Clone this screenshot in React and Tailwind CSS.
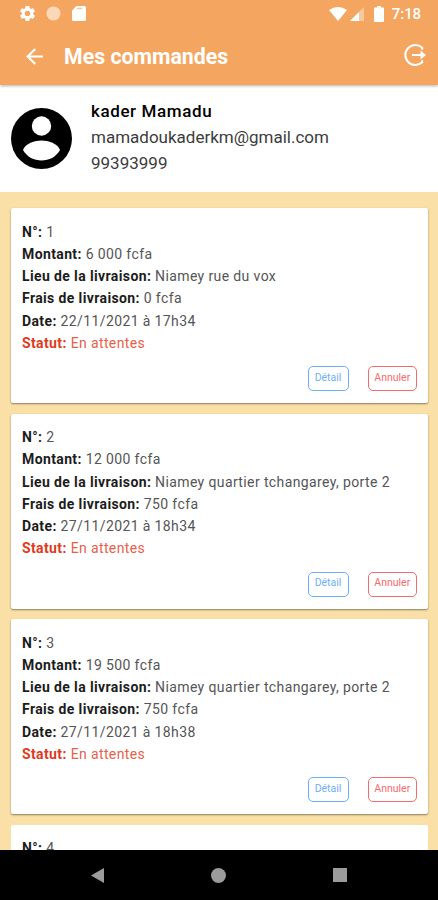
import React from "react"
import { MdSettings, MdArrowBack } from "react-icons/md"

const orders = [
  {
    id: 1,
    amount: "6 000 fcfa",
    place: "Niamey rue du vox",
    fee: "0 fcfa",
    date: "22/11/2021 à 17h34",
  },
  {
    id: 2,
    amount: "12 000 fcfa",
    place: "Niamey quartier tchangarey, porte 2",
    fee: "750 fcfa",
    date: "27/11/2021 à 18h34",
  },
  {
    id: 3,
    amount: "19 500 fcfa",
    place: "Niamey quartier tchangarey, porte 2",
    fee: "750 fcfa",
    date: "27/11/2021 à 18h38",
  },
]

function StatusBar() {
  return (
    <div className="flex h-[27px] items-center pl-[18px] pr-[17px]">
      <MdSettings className="size-[19px]" />
      <svg className="ml-[9px] size-[15px]" viewBox="0 0 15 15">
        <circle cx="7.5" cy="7.5" r="7" fill="#fbd9b8" />
        <path
          d="M12 2.500A7 7 0 0 1 2.500 12.300A7 7 0 0 0 12 2.500z"
          fill="#fff"
          opacity="0.8"
        />
      </svg>
      <svg className="ml-[11px] h-[15px] w-[14px]" viewBox="0 0 14 15">
        <path
          d="M4.500 0H12.500Q14 0 14 1.500V13.500Q14 15 12.500 15H1.500Q0 15 0 13.500V4.500z"
          fill="#fff"
        />
        <path d="M5 2.500h5" stroke="#f8c79c" strokeWidth="1.500" />
      </svg>
      <svg className="ml-auto h-[14px] w-[18px]" viewBox="0 0 18 14">
        <path d="M0 3Q9-3 18 3L9 14z" fill="#fff" />
      </svg>
      <svg className="ml-[3px] size-[14px]" viewBox="0 0 14 14">
        <path d="M14 0V14H0z" fill="#fff" opacity="0.4" />
        <path d="M9 5V14H0z" fill="#fff" />
      </svg>
      <svg className="ml-[10px] h-4 w-[10px]" viewBox="0 0 10 16">
        <path
          d="M3 0H7V1.500H9Q10 1.500 10 2.500V15Q10 16 9 16H1Q0 16 0 15V2.500Q0 1.500 1 1.500H3z"
          fill="#fff"
        />
      </svg>
      <span className="ml-2 mt-0.5 text-[15px] font-medium leading-none tracking-[-0.1px]">
        7:18
      </span>
    </div>
  )
}

function Header() {
  return (
    <header className="relative z-10 h-[85px] shrink-0 bg-[#f4a660] text-white shadow-[0_1px_3px_rgba(0,0,0,0.3)]">
      <StatusBar />
      <div className="flex h-[58px] items-center pl-[22px] pr-[11px]">
        <MdArrowBack className="size-[25px]" />
        <h1 className="ml-[17px] mt-px text-[21.3px] font-bold leading-none">
          Mes commandes
        </h1>
        <svg
          className="mb-[3px] ml-auto size-6"
          viewBox="0 0 24 24"
          fill="none"
          stroke="currentColor"
          strokeWidth="2"
        >
          <path d="M19.200 6.700V4.700A10 10 0 1 0 19.200 19.300V17.300" />
          <path d="M9 12h11" />
          <path d="M17.500 7.500l5.500 4.500l-5.500 4.500z" fill="currentColor" stroke="none" />
        </svg>
      </div>
    </header>
  )
}

function Profile() {
  return (
    <section className="flex h-[107px] shrink-0 items-start bg-white pl-[11px]">
      <svg className="mt-[23px] size-[61px]" viewBox="0 0 61 61">
        <circle cx="30.500" cy="30.500" r="30.500" />
        <circle cx="30.500" cy="18" r="9.700" fill="#fff" />
        <path
          d="M12 42C14 35.500 24 32.500 30.500 32.500S47 35.500 49 42C45 49 38 52.500 30.500 52.500S16 49 12 42z"
          fill="#fff"
        />
      </svg>
      <div className="ml-[19px] mt-[12.5px] text-[17px] leading-[26px] text-[#3c3c3c]">
        <p className="font-medium tracking-[0.6px] text-black">kader Mamadu</p>
        <p>mamadoukaderkm@gmail.com</p>
        <p>99393999</p>
      </div>
    </section>
  )
}

function Row({ label, children }) {
  return (
    <p>
      <span className="font-bold text-[#1c1c1c]">{label}:</span> {children}
    </p>
  )
}

function OrderCard({ order }) {
  return (
    <article className="h-[195px] shrink-0 rounded-[2px] bg-white px-[11px] pt-[12.5px] shadow-[0_1px_2px_rgba(0,0,0,0.45)]">
      <div className="text-[14px] leading-[22.3px] tracking-[0.38px] text-[#555]">
        <Row label="N°">{order.id}</Row>
        <Row label="Montant">{order.amount}</Row>
        <Row label="Lieu de la livraison">{order.place}</Row>
        <Row label="Frais de livraison">{order.fee}</Row>
        <Row label="Date">{order.date}</Row>
        <p className="text-[#e8604a]">
          <span className="font-bold text-[#e03a20]">Statut:</span> En attentes
        </p>
      </div>
      <div className="mt-3 flex justify-end gap-[19px] text-[10.5px]">
        <button className="h-[25px] w-[41px] rounded-[5px] border border-[#6cb0f8] pb-0.5 text-[#6cb0f8]">
          Détail
        </button>
        <button className="h-[25px] w-[49.5px] rounded-[5px] border border-[#f56b6b] pb-0.5 text-[#f56b6b]">
          Annuler
        </button>
      </div>
    </article>
  )
}

function NavBar() {
  return (
    <nav className="flex h-[50px] shrink-0 items-center justify-between bg-black px-[91px]">
      <svg className="h-[15px] w-[13px]" viewBox="0 0 13 15" fill="#9b9b9b">
        <path d="M13 0V15L0 7.500z" />
      </svg>
      <div className="size-[15px] rounded-full bg-[#9b9b9b]" />
      <div className="size-[14px] bg-[#9b9b9b]" />
    </nav>
  )
}

export default function App() {
  return (
    <div className="flex h-[900px] w-[438px] flex-col overflow-hidden bg-white font-['Roboto',sans-serif]">
      <Header />
      <Profile />
      <main className="flex min-h-0 flex-1 flex-col gap-[10.5px] overflow-hidden bg-[#fae0a7] pl-[11px] pr-[10px] pt-4">
        {orders.map((order) => (
          <OrderCard key={order.id} order={order} />
        ))}
        {/* next order, scrolled under the nav bar */}
        <article className="flex-1 rounded-t-[2px] bg-white px-[11px] pt-[12.5px] text-[14px] leading-[22.3px] tracking-[0.38px] text-[#555]">
          <Row label="N°">4</Row>
        </article>
      </main>
      <NavBar />
    </div>
  )
}
